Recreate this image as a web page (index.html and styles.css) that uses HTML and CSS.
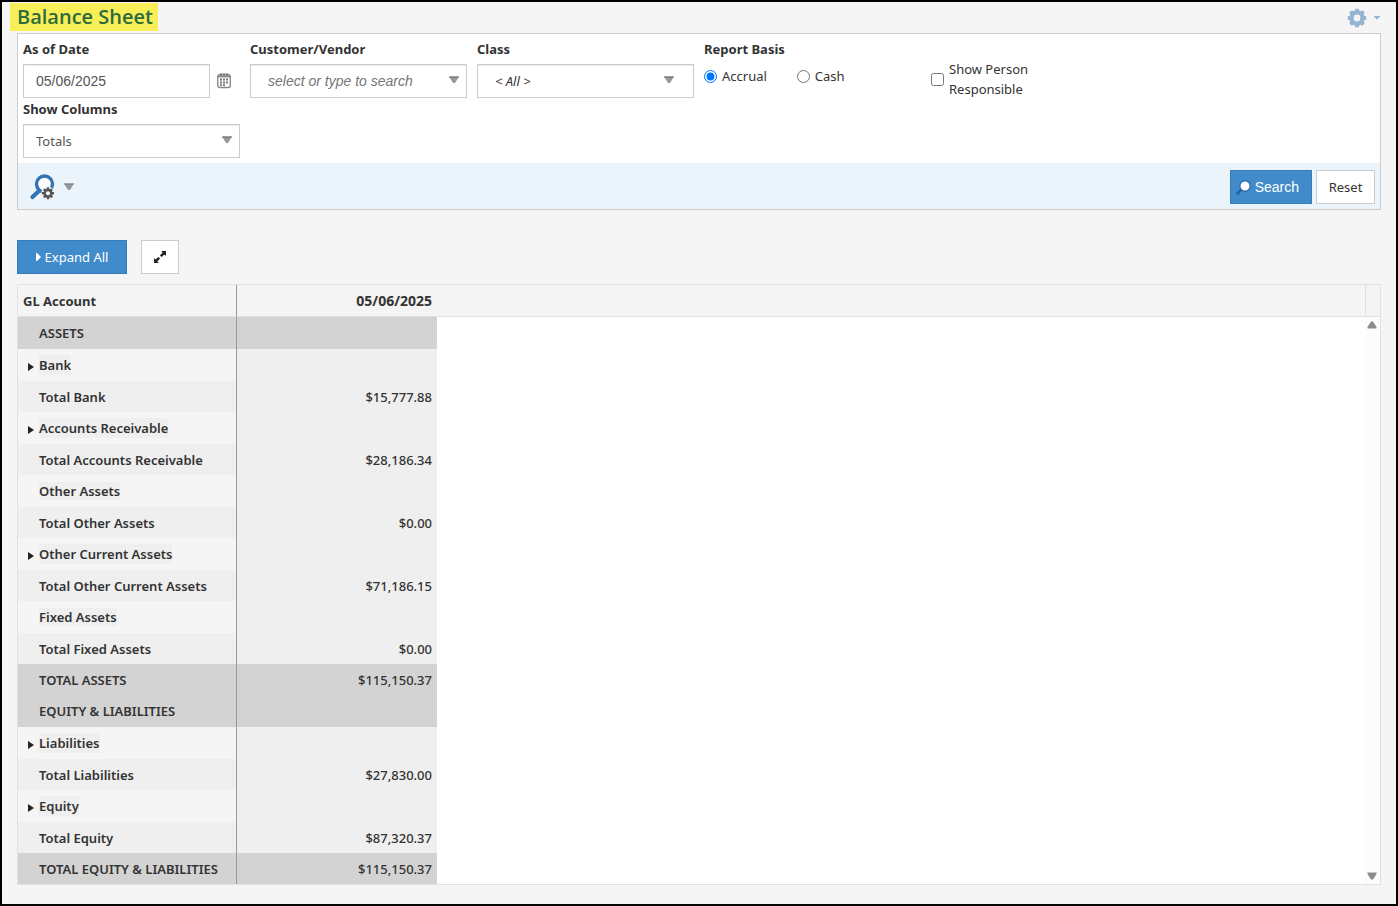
FILE: index.html
```html
<!DOCTYPE html>
<html lang="en">
<head>
<meta charset="utf-8">
<title>Balance Sheet</title>
<link rel="stylesheet" href="styles.css">
</head>
<body>
<main class="page">
  <header class="page-head">
    <h1 class="title">Balance Sheet</h1>
    <button class="settings" type="button" aria-label="Settings">
      <svg width="20" height="20" viewBox="0 0 20 20" aria-hidden="true"><g fill="#94b4d2"><circle cx="10" cy="10" r="7.4"/><path d="M8.2 0.8h3.6l0.8 3v12.4l-0.8 3H8.2l-0.8-3V3.8zM0.8 8.2v3.6l3 0.8h12.4l3-0.8V8.2l-3-0.8H3.8z"/><path d="M8.2 0.8h3.6l0.8 3v12.4l-0.8 3H8.2l-0.8-3V3.8zM0.8 8.2v3.6l3 0.8h12.4l3-0.8V8.2l-3-0.8H3.8z" transform="rotate(45 10 10)"/></g><circle cx="10" cy="10" r="3.4" fill="#f5f5f5"/></svg>
      <svg width="8" height="4" viewBox="0 0 8 4" aria-hidden="true"><path d="M0.5 0h7L4 3.8z" fill="#94b4d2"/></svg>
    </button>
  </header>

  <form class="filters">
    <div class="fields">
      <div class="field">
        <label class="label" for="date">As of Date</label>
        <div class="date-row">
          <input class="control arial" id="date" type="text" value="05/06/2025">
          <button class="icon-button" type="button" aria-label="Pick a date">
            <svg width="14" height="16" viewBox="0 0 14 16" aria-hidden="true"><rect x="0.7" y="1.7" width="12.6" height="12.8" rx="2" fill="#fff" stroke="#888" stroke-width="1.4"/><path d="M1 3.6h12" stroke="#888" stroke-width="1.6"/><path d="M4 0v3M7 0v3M10 0v3" stroke="#777" stroke-width="1.4"/><path d="M3 5.5h2v2H3zM6 5.5h2v2H6zM9 5.5h2v2H9zM3 8.4h2v2H3zM6 8.4h2v2H6zM9 8.4h2v2H9zM3 11.3h2v1.7H3zM6 11.3h2v1.7H6z" fill="#777"/></svg>
          </button>
        </div>
      </div>
      <div class="field">
        <label class="label" for="customer">Customer/Vendor</label>
        <div class="combo">
          <input class="control arial combo-text" id="customer" type="text" placeholder="select or type to search">
          <svg class="arrow" width="12" height="8" viewBox="0 0 12 8" aria-hidden="true"><path d="M1 0.5h10L7 7H5z" fill="#999"/><path d="M0.8 0.5h10.4l-0.8 1.3H1.6z" fill="#777"/></svg>
        </div>
      </div>
      <div class="field">
        <label class="label" for="class">Class</label>
        <div class="combo combo-inset">
          <select class="control combo-text all" id="class"><option>&lt; All &gt;</option></select>
          <svg class="arrow" width="12" height="8" viewBox="0 0 12 8" aria-hidden="true"><path d="M1 0.5h10L7 7H5z" fill="#999"/><path d="M0.8 0.5h10.4l-0.8 1.3H1.6z" fill="#777"/></svg>
        </div>
      </div>
      <fieldset class="field">
        <legend class="label">Report Basis</legend>
        <div class="radios">
          <label class="choice"><input type="radio" name="basis" checked>Accrual</label>
          <label class="choice"><input type="radio" name="basis">Cash</label>
        </div>
      </fieldset>
      <div class="field check-field">
        <label class="choice"><input type="checkbox"><span>Show Person Responsible</span></label>
      </div>
      <div class="field first">
        <label class="label" for="columns">Show Columns</label>
        <div class="combo">
          <select class="control" id="columns"><option>Totals</option></select>
          <svg class="arrow" width="12" height="8" viewBox="0 0 12 8" aria-hidden="true"><path d="M1 0.5h10L7 7H5z" fill="#999"/><path d="M0.8 0.5h10.4l-0.8 1.3H1.6z" fill="#777"/></svg>
        </div>
      </div>
    </div>
    <div class="actions">
      <button class="icon-button search-options" type="button" aria-label="Search options">
        <svg width="26" height="26" viewBox="0 0 26 26" aria-hidden="true"><path d="M3.5 23l8-7.5" stroke="#3274b5" stroke-width="4.2" stroke-linecap="round"/><circle cx="15.5" cy="10" r="8" fill="#fff" stroke="#3274b5" stroke-width="3.4"/><circle cx="19" cy="19.2" r="6.6" fill="#ebf3fb"/><g fill="#555"><circle cx="19" cy="19.2" r="4.5"/><path d="M17.8 13.2h2.4v12h-2.4zM13 18h12v2.4H13z"/><path d="M17.8 13.3h2.4v11.8h-2.4zM13.1 18h11.8v2.4H13.1z" transform="rotate(45 19 19.2)"/></g><circle cx="19" cy="19.2" r="2" fill="#fff"/></svg>
        <svg width="12" height="8" viewBox="0 0 12 8" aria-hidden="true"><path d="M1 0.5h10L7 7H5z" fill="#999"/><path d="M0.8 0.5h10.4l-0.8 1.3H1.6z" fill="#888"/></svg>
      </button>
      <div class="submit">
        <button class="button primary arial search" type="button">
          <svg width="16" height="16" viewBox="0 0 16 16" aria-hidden="true"><path d="M1.5 14.5l5-5" stroke="#235fa8" stroke-width="2.6" stroke-linecap="round"/><circle cx="9" cy="7" r="5.2" fill="#fff" stroke="#2d6cb3" stroke-width="1.4"/></svg>Search</button>
        <button class="button reset" type="reset">Reset</button>
      </div>
    </div>
  </form>

  <div class="toolbar">
    <button class="button primary expand" type="button"><svg width="5" height="8" viewBox="0 0 5 8" aria-hidden="true"><path d="M0 0h1l4 4-4 4H0z" fill="#fff"/></svg>Expand All</button>
    <button class="button full" type="button" aria-label="Full screen"><svg width="14" height="14" viewBox="0 0 14 14" aria-hidden="true"><path d="M8 1h5v5l-1.6-1.6L8.6 7.1 6.9 5.4l2.8-2.8zM6 13H1V8l1.6 1.6 2.8-2.7 1.7 1.7-2.8 2.8z" fill="#222"/></svg></button>
  </div>

  <section class="grid">
    <table class="report">
      <thead><tr><th class="name" scope="col">GL Account</th><th class="amount" scope="col">05/06/2025</th><td></td></tr></thead>
      <tbody>
        <tr class="section"><td class="name">ASSETS</td><td class="amount"></td><td></td></tr>
        <tr class="group"><td class="name"><button class="toggle" type="button"><span>Bank</span></button></td><td class="amount"></td><td></td></tr>
        <tr class="total"><td class="name">Total Bank</td><td class="amount">$15,777.88</td><td></td></tr>
        <tr class="group"><td class="name"><button class="toggle" type="button"><span>Accounts Receivable</span></button></td><td class="amount"></td><td></td></tr>
        <tr class="total"><td class="name">Total Accounts Receivable</td><td class="amount">$28,186.34</td><td></td></tr>
        <tr class="group"><td class="name"><span>Other Assets</span></td><td class="amount"></td><td></td></tr>
        <tr class="total"><td class="name">Total Other Assets</td><td class="amount">$0.00</td><td></td></tr>
        <tr class="group"><td class="name"><button class="toggle" type="button"><span>Other Current Assets</span></button></td><td class="amount"></td><td></td></tr>
        <tr class="total"><td class="name">Total Other Current Assets</td><td class="amount">$71,186.15</td><td></td></tr>
        <tr class="group"><td class="name"><span>Fixed Assets</span></td><td class="amount"></td><td></td></tr>
        <tr class="total"><td class="name">Total Fixed Assets</td><td class="amount">$0.00</td><td></td></tr>
        <tr class="total grand"><td class="name">TOTAL ASSETS</td><td class="amount">$115,150.37</td><td></td></tr>
        <tr class="section"><td class="name">EQUITY &amp; LIABILITIES</td><td class="amount"></td><td></td></tr>
        <tr class="group"><td class="name"><button class="toggle" type="button"><span>Liabilities</span></button></td><td class="amount"></td><td></td></tr>
        <tr class="total"><td class="name">Total Liabilities</td><td class="amount">$27,830.00</td><td></td></tr>
        <tr class="group"><td class="name"><button class="toggle" type="button"><span>Equity</span></button></td><td class="amount"></td><td></td></tr>
        <tr class="total"><td class="name">Total Equity</td><td class="amount">$87,320.37</td><td></td></tr>
        <tr class="total grand"><td class="name">TOTAL EQUITY &amp; LIABILITIES</td><td class="amount">$115,150.37</td><td></td></tr>
      </tbody>
    </table>
    <div class="scroll">
      <div class="scroll-head"></div>
      <div class="scroll-track">
        <svg width="10" height="8" viewBox="0 0 10 8" aria-hidden="true"><path d="M4 0.5h2l3.5 5.4V7.5H0.5V5.9z" fill="#8b8b8b"/></svg>
        <svg width="10" height="8" viewBox="0 0 10 8" aria-hidden="true"><path d="M4 7.5h2l3.5-5.4V0.5H0.5v1.6z" fill="#8b8b8b"/></svg>
      </div>
    </div>
  </section>
</main>
</body>
</html>
```
FILE: styles.css
```css
* { box-sizing: border-box; }

body {
  margin: 0;
  min-height: 100vh;
  border: 2px solid #000;
  background: #f5f5f5;
  color: #333;
  font: 13px/20px "Noto Sans", "Open Sans", sans-serif;
}

button, input, select { font: inherit; color: inherit; }
button { cursor: pointer; }
svg { display: block; flex: none; }

.page { padding: 1px 15px 18px; }

.page-head {
  display: flex;
  justify-content: space-between;
  align-items: flex-start;
}

.title {
  margin: 0 0 2px -7px;
  padding: 0 5px 0 7px;
  background: #f8ee58;
  color: #2d6a3c;
  font-family: "Open Sans", "Noto Sans", sans-serif;
  font-size: 20px;
  line-height: 28px;
  font-weight: 600;
}

.settings {
  display: flex;
  align-items: center;
  gap: 6px;
  padding: 5px 0 0;
  border: 0;
  background: none;
}

.filters { border: 1px solid #ccc; background: #fff; }

.fields {
  display: grid;
  grid-template-columns: repeat(auto-fill, 217px);
  gap: 0 10px;
  padding: 5px;
}

.field { margin: 0; padding: 0; border: 0; min-width: 0; }
.first { grid-column: 1; }

.label {
  display: block;
  height: 25px;
  padding: 0;
  font-weight: 700;
}

.field .control { height: 34px; }
.field .combo, .date-row { margin-bottom: 1px; }
.first .combo { margin: 0; }

.control {
  display: block;
  width: 100%;
  padding: 0 12px;
  border: 1px solid #ccc;
  border-radius: 0;
  background: #fff;
  box-shadow: inset 0 1px 1px rgba(0, 0, 0, 0.08);
  color: #555;
  appearance: none;
}

.arial { font-family: "Liberation Sans", Arial, sans-serif; font-size: 14px; }
.combo-text { padding-left: 17px; }
.combo-text::placeholder { color: #777; font-style: italic; }
.all { font-style: italic; color: #333; }

.date-row { display: flex; }
.date-row .icon-button { padding: 0 9px 0 7px; }

.icon-button {
  display: flex;
  align-items: center;
  border: 0;
  background: none;
}

.combo { position: relative; }
.arrow { position: absolute; right: 7px; top: 12px; pointer-events: none; }
.combo-inset .arrow { right: 19px; }

.choice { display: flex; align-items: center; gap: 5px; }
.choice input { width: 13px; height: 13px; margin: 0; flex: none; }
.radios { display: flex; gap: 30px; padding-top: 2px; }
.check-field { width: 110px; padding-top: 20px; }

.actions {
  display: flex;
  justify-content: space-between;
  align-items: center;
  padding: 7px 5px 5px 11px;
  background: #ebf3fb;
}

.search-options { gap: 8px; padding: 0; }
.submit { display: flex; gap: 4px; }

.button {
  display: flex;
  align-items: center;
  justify-content: center;
  height: 34px;
  padding: 0 12px;
  border: 1px solid #ccc;
  background: #fff;
}

.primary { border-color: #357ebd; background: #428bca; color: #fff; }
.search { gap: 3px; padding: 0 12px 0 5px; }
.reset { width: 59px; padding: 0; }

.toolbar { display: flex; gap: 14px; padding: 30px 0 10px; }
.expand { width: 110px; gap: 4px; padding: 0; }
.full { width: 38px; padding: 0; color: #222; }

.grid {
  display: flex;
  border: 1px solid #dee2e6;
  background: #fff;
}

.report {
  flex: 1;
  table-layout: fixed;
  width: 100%;
  border-collapse: separate;
  border-spacing: 0;
  font-weight: 500;
}

.report td, .report th { padding: 0 5px; text-align: left; }
.report thead tr { height: 32px; background: #f4f4f4; }
.report thead th, .report thead td { border-bottom: 1px solid #dee2e6; font-weight: 700; }
.report .name { width: 219px; border-right: 1px solid #999; }
.report tbody .name { padding-left: 21px; background: #efefef; font-weight: 600; white-space: nowrap; }
.report .amount { width: 200px; text-align: right; }
.report thead .amount { font-size: 14px; }
.report tbody .amount { background: #efefef; }
.report .section, .report .group { height: 32px; }
.report .total { height: 31px; }
.report .group .name { background: #f5f5f5; }
.report .group span { background: #efefef; }
.report .section .name, .report .section .amount,
.report .grand .name, .report .grand .amount { background: #d3d3d3; }

.toggle {
  display: flex;
  align-items: center;
  gap: 5px;
  margin-left: -11px;
  padding: 0;
  border: 0;
  background: none;
}

.toggle::before {
  content: "";
  margin-top: 3px;
  border: 4px solid transparent;
  border-left: 6px solid #222;
  border-right: 0;
}

.scroll { display: flex; flex-direction: column; width: 15px; }
.scroll-head { height: 32px; border-left: 1px solid #dee2e6; border-bottom: 1px solid #dee2e6; background: #f4f4f4; }

.scroll-track {
  display: flex;
  flex: 1;
  flex-direction: column;
  justify-content: space-between;
  align-items: flex-start;
  padding: 4px 2px;
  background: #fcfcfc;
}
```
